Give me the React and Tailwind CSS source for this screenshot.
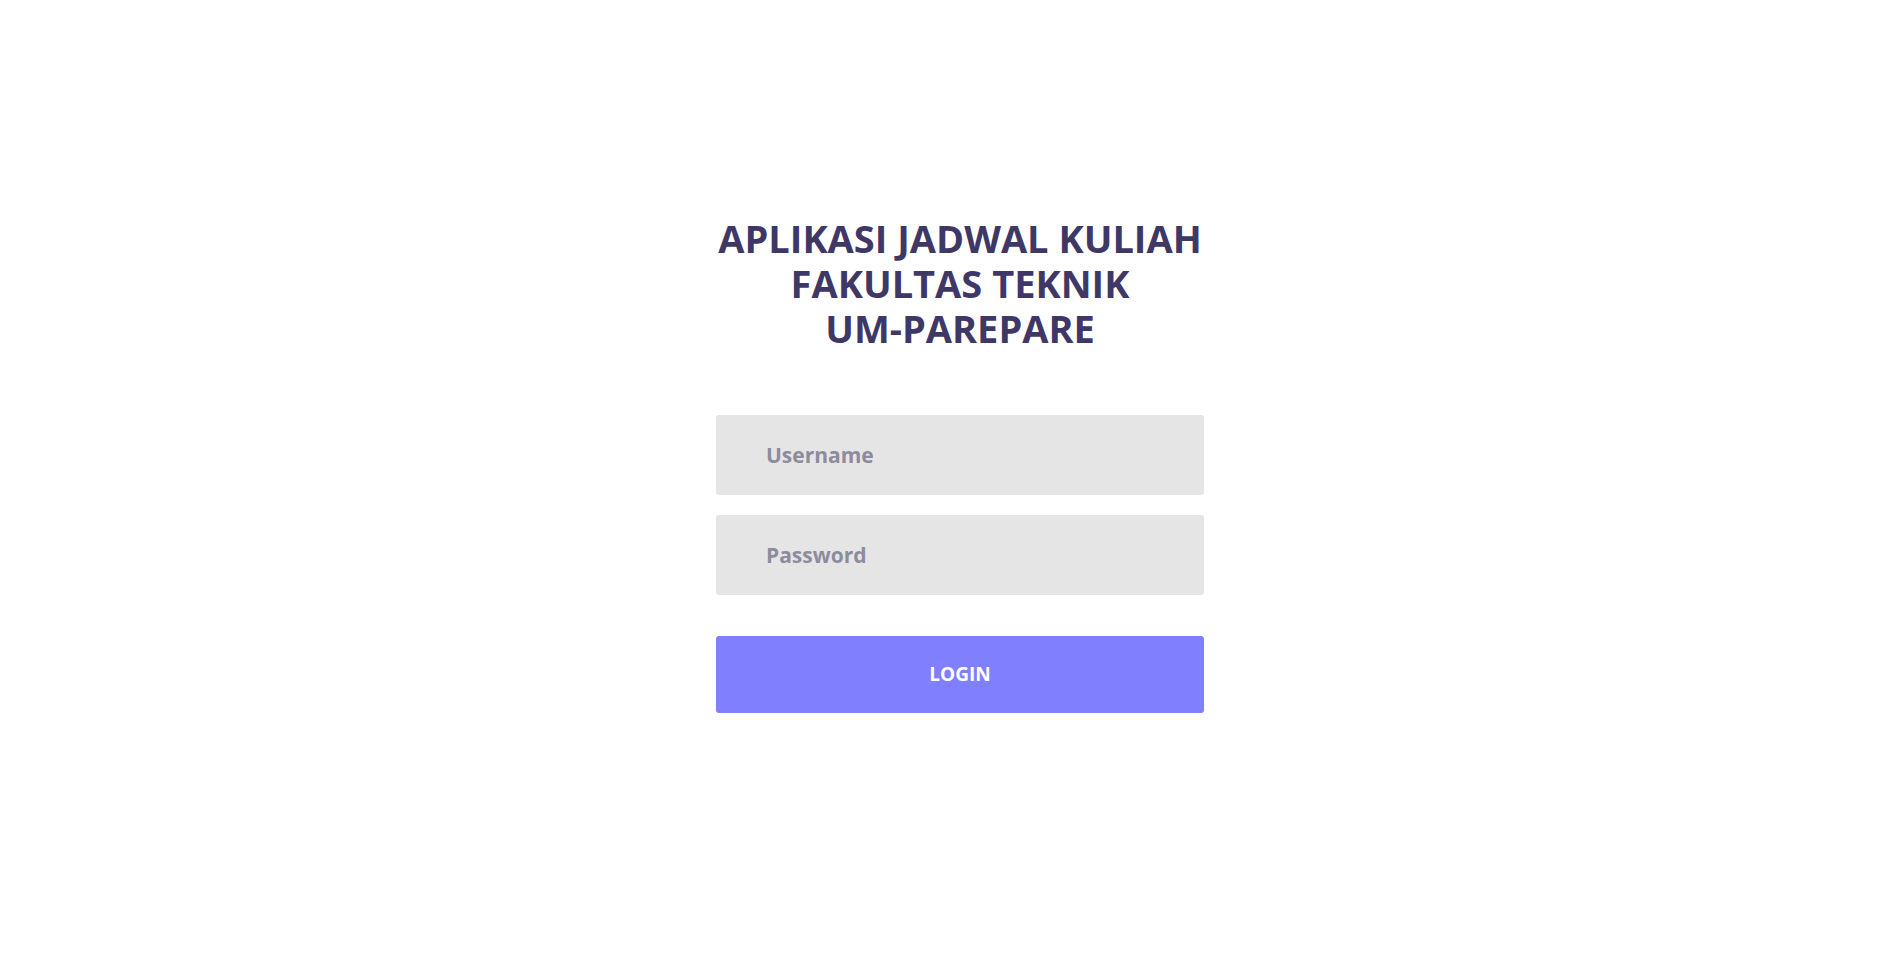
export default function App() {
  return (
    <div className="min-h-screen bg-white pl-[17px] font-['Open_Sans',sans-serif]">
      <div className="mx-auto w-[488px] pt-[216px]">
        <h1 className="text-center text-[38px] font-bold leading-[45px] text-[#3f3866]">
          APLIKASI JADWAL KULIAH
          <br />
          FAKULTAS TEKNIK
          <br />
          UM-PAREPARE
        </h1>

        <form className="mt-[64px]" onSubmit={(e) => e.preventDefault()}>
          <input
            type="text"
            placeholder="Username"
            className="block h-[80px] w-full rounded-[3px] bg-[#e5e5e5] px-[50px] text-[21px] font-bold text-[#3f3866] outline-none placeholder:text-[#8e8b9c]"
          />
          <input
            type="password"
            placeholder="Password"
            className="mt-[20px] block h-[80px] w-full rounded-[3px] bg-[#e5e5e5] px-[50px] text-[21px] font-bold text-[#3f3866] outline-none placeholder:text-[#8e8b9c]"
          />
          <button
            type="submit"
            className="mt-[41px] block h-[77px] w-full rounded-[3px] bg-[#8080ff] text-[19px] font-bold text-white"
          >
            LOGIN
          </button>
        </form>
      </div>
    </div>
  );
}
